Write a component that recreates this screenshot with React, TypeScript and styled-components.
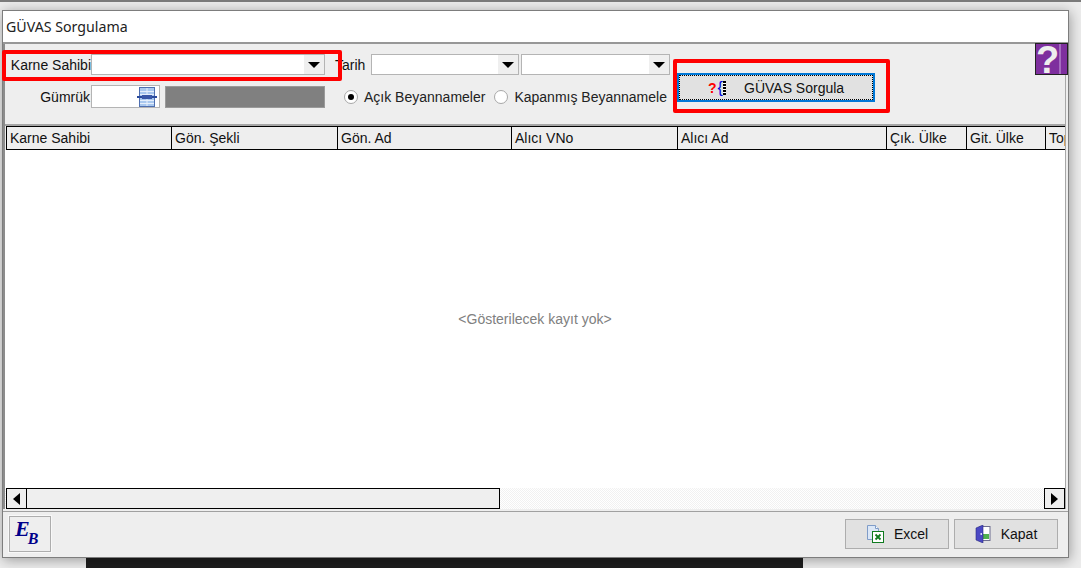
import React from "react";
import styled, { createGlobalStyle } from "styled-components";

const GlobalStyle = createGlobalStyle`
html, body {
  margin: 0;
  padding: 0;
  background: #f0f0f0;
}
* {
  box-sizing: border-box;
}
`;

const Page = styled.div`
width: 1081px;
height: 568px;
overflow: hidden;
display: flex;
flex-direction: column;
padding: 8px 0 0 2px;
border-top: 2px solid #7a7a7a;
background: #ececec;
font: 14px "Liberation Sans", Arial, sans-serif;
color: #111;
`;

const Window = styled.div`
width: 1067px;
height: 548px;
flex-shrink: 0;
display: flex;
flex-direction: column;
background: #fff;
border: 1px solid #7d7d7d;
box-shadow: 1px 2px 12px rgba(0, 0, 0, 0.35);
position: relative;
z-index: 1;
`;

const TitleBar = styled.div`
height: 31px;
flex-shrink: 0;
display: flex;
align-items: center;
padding-left: 3px;
font: 14.2px "Noto Sans", "Open Sans", sans-serif;
color: #222;
`;

const Body = styled.div`
flex: 1;
min-height: 0;
display: flex;
flex-direction: column;
background: #eee;
border-top: 2px solid #979797;
`;

const MainPanel = styled.div`
flex: 1;
min-height: 0;
display: flex;
flex-direction: column;
margin-right: 2px;
border-left: 2px solid #8c8c8c;
border-right: 1px solid #a8a8a8;
`;

const Toolbar = styled.div`
height: 82px;
flex-shrink: 0;
display: flex;
border-bottom: 2px solid #a6a6a6;
position: relative;
`;

const Fields = styled.div`
width: 672px;
padding-top: 9px;
display: flex;
flex-direction: column;
gap: 9px;
`;

const FieldRow = styled.div`
display: flex;
align-items: center;
height: 23px;
`;

const FieldLabel = styled.label<{ $width: number; $left?: number }>`
width: ${(p) => p.$width}px;
margin-left: ${(p) => p.$left ?? 0}px;
text-align: right;
white-space: nowrap;
flex-shrink: 0;
`;

const Combo = styled.div<{ $width: number; $left?: number }>`
width: ${(p) => p.$width}px;
margin-left: ${(p) => p.$left ?? 0}px;
height: 21px;
display: flex;
justify-content: flex-end;
background: #fff;
border: 1px solid #b4b4b4;
`;

const ComboArrow = styled.div`
width: 20px;
display: flex;
align-items: center;
justify-content: center;
background: #efefef;
&::after {
  content: "";
  border-left: 6px solid transparent;
  border-right: 6px solid transparent;
  border-top: 6px solid #000;
}
`;

const SpinInput = styled.div`
width: 69px;
height: 23px;
margin-left: 1px;
display: flex;
justify-content: flex-end;
align-items: center;
padding-right: 2px;
background: #fff;
border: 1px solid #b4b4b4;
`;

const GreyBox = styled.div`
width: 160px;
height: 22px;
margin-left: 5px;
background: #808080;
border: 1px solid #9a9a9a;
`;

const RadioItem = styled.div<{ $left: number }>`
display: flex;
align-items: center;
gap: 6px;
margin-left: ${(p) => p.$left}px;
white-space: nowrap;
color: #222;
`;

const RadioDot = styled.span<{ $on?: boolean }>`
width: 14px;
height: 14px;
border-radius: 50%;
border: 1px solid #a8a8a8;
background: #fff;
display: flex;
align-items: center;
justify-content: center;
&::after {
  content: "";
  width: 6px;
  height: 6px;
  border-radius: 50%;
  background: ${(p) => (p.$on ? "#000" : "transparent")};
}
`;

const QueryButton = styled.button`
width: 198px;
height: 29px;
margin-top: 29px;
padding: 0 0 0 29px;
display: flex;
align-items: center;
background: #e1e1e1;
border: 2px solid #0078d7;
outline: 1px dotted #000;
outline-offset: -3px;
font: 14px "Liberation Sans", Arial, sans-serif;
color: #111;
`;

const QueryIcon = styled.span`
width: 36px;
flex-shrink: 0;
display: flex;
align-items: center;
font: bold 14px "Liberation Sans", Arial, sans-serif;
`;

const QueryMark = styled.span`
color: #f00;
`;

const QueryBrace = styled.span`
color: #0000e0;
font-weight: normal;
font-size: 16px;
line-height: 14px;
margin-left: 1px;
`;

const QueryDash = styled.span`
width: 3px;
height: 14px;
background: repeating-linear-gradient(#000 0 2px, #fff 2px 3px);
`;

const HelpTile = styled.div`
position: absolute;
top: -1px;
right: -3px;
width: 33px;
height: 32px;
background: #7e2f9e;
border: 1px solid #222;
color: #eee;
font: bold 38px/32px "Liberation Sans", Arial, sans-serif;
overflow: hidden;
&::after {
  content: "";
  position: absolute;
  top: 0;
  bottom: 0;
  right: 6px;
  width: 2px;
  background: #a56cc0;
}
`;

const TableHead = styled.div`
height: 24px;
flex-shrink: 0;
margin-left: 1px;
display: grid;
grid-template-columns: 165px 166px 174px 166px 209px 80px 79px 20px;
overflow: hidden;
border-top: 1px solid #000;
border-bottom: 1px solid #000;
`;

const HeadCell = styled.div`
border-left: 1px solid #000;
padding-left: 3px;
display: flex;
align-items: center;
white-space: nowrap;
overflow: hidden;
`;

const TableBody = styled.div`
flex: 1;
min-height: 0;
display: flex;
align-items: center;
justify-content: center;
background: #fff;
color: #808080;
font-size: 14px;
`;

const ScrollBar = styled.div`
height: 21px;
flex-shrink: 0;
display: flex;
padding-left: 1px;
background: repeating-conic-gradient(#f1f1f1 0 25%, #fff 0 50%) 0 0 / 2px 2px;
`;

const ScrollButton = styled.div<{ $dir: "left" | "right" }>`
width: 21px;
flex-shrink: 0;
display: flex;
align-items: center;
justify-content: center;
background: #efefef;
border: 1px solid #000;
${(p) => (p.$dir === "right" ? "margin-left: auto;" : "")}
&::after {
  content: "";
  border-top: 6px solid transparent;
  border-bottom: 6px solid transparent;
  ${(p) => (p.$dir === "left" ? "border-right" : "border-left")}: 7px solid #000;
}
`;

const ScrollThumb = styled.div`
width: 473px;
background: #efefef;
border: 1px solid #000;
border-left: 0;
`;

const Footer = styled.div`
height: 46px;
flex-shrink: 0;
display: flex;
align-items: flex-start;
padding: 4px 10px 0 6px;
margin-top: 2px;
border-top: 1px solid #a0a0a0;
`;

const LogoButton = styled.div`
width: 42px;
height: 36px;
display: flex;
align-items: flex-start;
padding-left: 5px;
background: #eee;
border: 1px solid #adadad;
box-shadow: 0 0 0 1px #f8f8f8;
color: #00008b;
font: italic bold 20px/20px "Liberation Serif", serif;
`;

const LogoLetter = styled.span<{ $low?: boolean }>`
margin-top: ${(p) => (p.$low ? 12 : 2)}px;
margin-left: ${(p) => (p.$low ? -2 : 0)}px;
font-size: ${(p) => (p.$low ? 16 : 22)}px;
`;

const FooterButton = styled.div<{ $first?: boolean }>`
width: 104px;
height: 30px;
margin-top: 3px;
margin-left: ${(p) => (p.$first ? "auto" : "5px")};
display: flex;
align-items: center;
justify-content: center;
gap: 10px;
background: #e1e1e1;
border: 1px solid #adadad;
`;

const Dock = styled.div`
width: 717px;
height: 20px;
flex-shrink: 0;
margin-left: 84px;
background: #1e1e1e;
`;

const Marker = styled.div<{ $x: number; $y: number; $w: number; $h: number }>`
position: absolute;
left: ${(p) => p.$x}px;
top: ${(p) => p.$y}px;
width: ${(p) => p.$w}px;
height: ${(p) => p.$h}px;
border: 4px solid #f00;
border-radius: 2px;
pointer-events: none;
z-index: 2;
`;

const CalendarIcon = () => (
  <svg width="20" height="20" viewBox="0 0 20 20">
    <rect x="2.5" y=".5" width="15" height="19" fill="#a9c8ef" stroke="#4f6fb0" />
    <path d="M3 4.5h14M3 7.5h14M3 13.5h14M3 16.5h14M10 1v18" stroke="#e6effb" strokeWidth="1" />
    <rect x="0" y="9" width="20" height="2" fill="#2a4a9c" />
    <rect x="5" y="8" width="10" height="4" fill="#3a58a8" />
  </svg>
);

const ExcelIcon = () => (
  <svg width="18" height="18" viewBox="0 0 18 18">
    <path d="M1.5 .5h8l3 3v11h-11z" fill="#dbe7f7" stroke="#7f9cc8" />
    <path d="M9.5 .5v3h3" fill="#fff" stroke="#7f9cc8" />
    <rect x="6.5" y="6.5" width="11" height="11" fill="#fff" stroke="#0f7b1f" />
    <path d="M9.5 9.5l5 5M14.5 9.5l-5 5" stroke="#0f7b1f" strokeWidth="1.8" />
  </svg>
);

const DoorIcon = () => (
  <svg width="16" height="18" viewBox="0 0 16 18">
    <rect x="5" y="1.5" width="10" height="14" fill="#fff" stroke="#6d6d8f" />
    <rect x="8" y="9" width="6" height="5" fill="#4fb04f" />
    <path d="M1 3l7-3v18l-7-3z" fill="#4a48c4" stroke="#2a2a80" strokeWidth=".6" />
    <rect x="5.5" y="8" width="1.5" height="2" fill="#d8d8f0" />
  </svg>
);

const columns = ["Karne Sahibi", "Gön. Şekli", "Gön. Ad", "Alıcı VNo", "Alıcı Ad", "Çık. Ülke", "Git. Ülke", "Top"];

export default function App() {
  return (
    <>
      <GlobalStyle />
      <Page>
        <Window>
          <TitleBar>GÜVAS Sorgulama</TitleBar>
          <Body>
            <MainPanel>
              <Toolbar>
                <Fields>
                  <FieldRow>
                    <FieldLabel $width={86}>Karne Sahibi</FieldLabel>
                    <Combo $width={234}>
                      <ComboArrow />
                    </Combo>
                    <FieldLabel $width={28} $left={10}>Tarih</FieldLabel>
                    <Combo $width={148} $left={8}>
                      <ComboArrow />
                    </Combo>
                    <Combo $width={149} $left={2}>
                      <ComboArrow />
                    </Combo>
                  </FieldRow>
                  <FieldRow>
                    <FieldLabel $width={85}>Gümrük</FieldLabel>
                    <SpinInput>
                      <CalendarIcon />
                    </SpinInput>
                    <GreyBox />
                    <RadioItem $left={19}>
                      <RadioDot $on />
                      Açık Beyannameler
                    </RadioItem>
                    <RadioItem $left={9}>
                      <RadioDot />
                      Kapanmış Beyannamele
                    </RadioItem>
                  </FieldRow>
                </Fields>
                <QueryButton>
                  <QueryIcon>
                    <QueryMark>?</QueryMark>
                    <QueryBrace>{"{"}</QueryBrace>
                    <QueryDash />
                  </QueryIcon>
                  GÜVAS Sorgula
                </QueryButton>
                <HelpTile>?</HelpTile>
              </Toolbar>
              <TableHead>
                {columns.map((c) => (
                  <HeadCell key={c}>{c}</HeadCell>
                ))}
              </TableHead>
              <TableBody>&lt;Gösterilecek kayıt yok&gt;</TableBody>
              <ScrollBar>
                <ScrollButton $dir="left" />
                <ScrollThumb />
                <ScrollButton $dir="right" />
              </ScrollBar>
            </MainPanel>
            <Footer>
              <LogoButton>
                <LogoLetter>E</LogoLetter>
                <LogoLetter $low>B</LogoLetter>
              </LogoButton>
              <FooterButton $first>
                <ExcelIcon />
                Excel
              </FooterButton>
              <FooterButton>
                <DoorIcon />
                Kapat
              </FooterButton>
            </Footer>
          </Body>
        </Window>
        <Dock />
        <Marker $x={2} $y={50} $w={340} $h={31} />
        <Marker $x={673} $y={59} $w={217} $h={54} />
      </Page>
    </>
  );
}
